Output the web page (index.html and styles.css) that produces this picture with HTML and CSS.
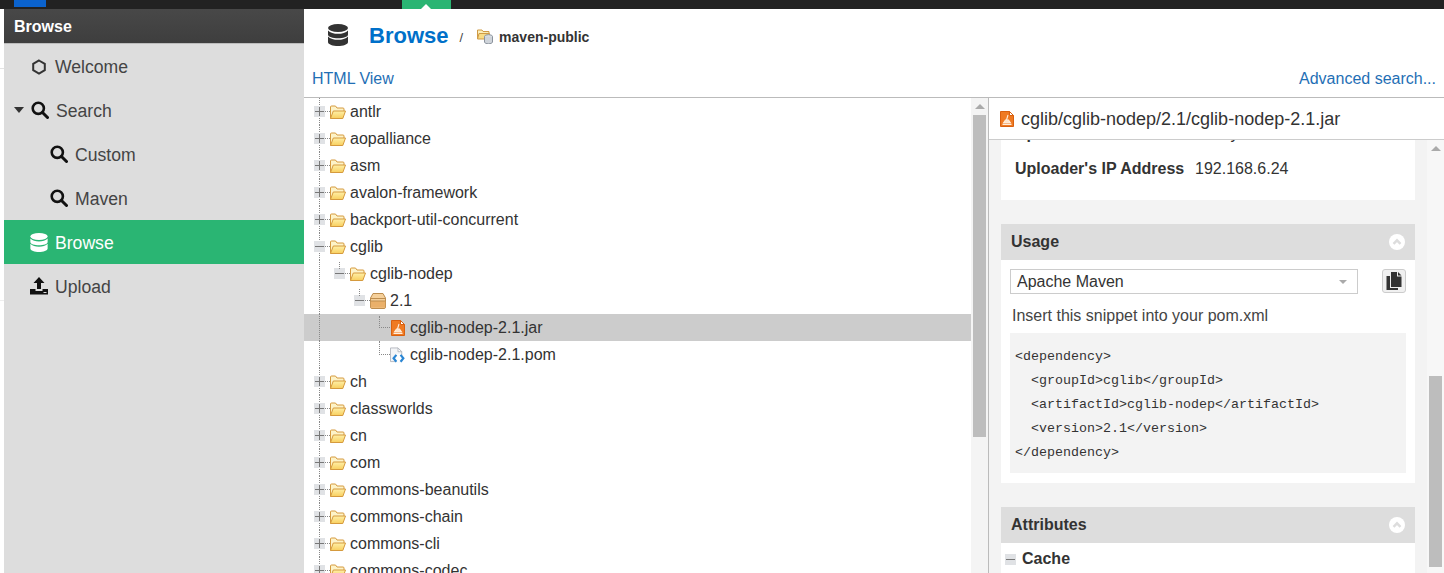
FILE: index.html
```html
<!DOCTYPE html>
<html lang="en">
<head>
<meta charset="utf-8">
<title>Browse</title>
<link rel="stylesheet" href="styles.css">
</head>
<body>
<svg class="defs" aria-hidden="true">
  <defs>
    <linearGradient id="fy" x1="0" y1="0" x2="0" y2="1"><stop offset="0" stop-color="#fff0a8"/><stop offset="1" stop-color="#f8cf5e"/></linearGradient>
    <symbol id="folder" viewBox="0 0 16 16">
      <path d="M.5 14.500V3a1 1 0 0 1 1-1h4l1.500 2h6a1 1 0 0 1 1 1v2.500" fill="#fdf3c8" stroke="#d59a3e"/>
      <path d="M.5 14.500 3.300 7h12.200l-2.700 7.500z" fill="url(#fy)" stroke="#d59a3e" stroke-linejoin="round"/>
    </symbol>
    <symbol id="pkg" viewBox="0 0 16 16">
      <path d="M3 .5h10l2.500 4.500v9a1.500 1.500 0 0 1-1.500 1.500H2A1.500 1.500 0 0 1 .5 14V5z" fill="#f5d09b" stroke="#bd8d4f"/>
      <path d="M.8 8h14.400v6.700H.8z" fill="#eab06a"/>
      <path d="M.5 5.500h15M.5 8h15" stroke="#bd8d4f"/>
    </symbol>
    <symbol id="jar" viewBox="0 0 14 16">
      <path d="M.5.500h9l4 4v11H.5z" fill="#ef7a22" stroke="#d9600f"/>
      <path d="M9.500.500v4h4z" fill="#fff" stroke="#d9600f"/>
      <path d="M8 4 6.500 9M5.500 9h3L10.500 12h-7zM2.500 13.500h9" fill="#ffe3c7" stroke="#ffeedd" stroke-width="1.100"/>
    </symbol>
    <symbol id="pom" viewBox="0 0 17 16">
      <path d="M.5.500h8l4 4v10.500H.5z" fill="#f4f5f7" stroke="#b4b8bf"/>
      <path d="M8.500.500v4h4z" fill="#fff" stroke="#b4b8bf"/>
      <circle cx="9" cy="11.500" r="4.500" fill="#fff"/>
      <path d="M6.800 7.800 3.800 11.500l3 3.700M11.200 7.800l3 3.700-3 3.700" fill="none" stroke="#2a86d4" stroke-width="2.300"/>
    </symbol>
    <symbol id="search" viewBox="0 0 18 18">
      <circle cx="7.300" cy="7.300" r="5.600" fill="none" stroke="currentColor" stroke-width="2.600"/>
      <path d="M11.500 11.500 16.500 16.500" stroke="currentColor" stroke-width="3" stroke-linecap="round"/>
    </symbol>
    <symbol id="db" viewBox="0 0 20 22">
      <ellipse cx="10" cy="4" rx="10" ry="4" fill="currentColor"/>
      <path d="M0 6.500C2 9 6 9.800 10 9.800S18 9 20 6.500V10.500C20 13 15 14.300 10 14.300S0 13 0 10.500zM0 12.500C2 15 6 15.800 10 15.800S18 15 20 12.500V18C20 20.500 15 22 10 22S0 20.500 0 18z" fill="currentColor"/>
    </symbol>
  </defs>
</svg>

<div class="topbar">
  <span class="tab-blue"></span>
  <span class="tab-green"></span>
</div>

<div class="app">
  <div class="gutter"></div>

  <nav class="sidebar">
    <div class="side-head">Browse</div>
    <div class="nav-item">
      <svg class="nav-ico hex" viewBox="0 0 16 16"><path d="M8 1.500 13.800 4.800v6.400L8 14.500 2.200 11.200V4.800z" fill="none" stroke="currentColor" stroke-width="2"/></svg>
      <span class="nav-label">Welcome</span>
    </div>
    <div class="nav-item nav-parent">
      <span class="caret"></span>
      <svg class="nav-ico"><use href="#search"/></svg>
      <span class="nav-label">Search</span>
    </div>
    <div class="nav-item nav-sub">
      <svg class="nav-ico"><use href="#search"/></svg>
      <span class="nav-label">Custom</span>
    </div>
    <div class="nav-item nav-sub">
      <svg class="nav-ico"><use href="#search"/></svg>
      <span class="nav-label">Maven</span>
    </div>
    <div class="nav-item active">
      <svg class="nav-ico nav-db"><use href="#db"/></svg>
      <span class="nav-label">Browse</span>
    </div>
    <div class="nav-item">
      <svg class="nav-ico" viewBox="0 0 18 18"><path d="M9 0 14.500 6H11v6H7V6H3.500z" fill="currentColor"/><path d="M0 12h5.500v2h7v-2H18v5.500H0z" fill="currentColor"/><path d="M13.500 15.500h3" stroke="#ddd"/></svg>
      <span class="nav-label">Upload</span>
    </div>
  </nav>

  <main class="main">
    <header class="title-row">
      <svg class="title-db"><use href="#db"/></svg>
      <h1 class="title">Browse</h1>
      <span class="slash">/</span>
      <svg class="repo-ico" viewBox="0 0 16 16">
        <path d="M.5 11V2h4.500l1 1.500h6V6" fill="#fbeeb9" stroke="#cf9a45"/>
        <path d="M.5 11 2 5.500h10.500L11 11z" fill="#f9dc85" stroke="#cf9a45"/>
        <ellipse cx="11.500" cy="8.500" rx="4" ry="1.800" fill="#dfe3e8" stroke="#8a929c"/>
        <path d="M7.500 8.500V14c0 1 1.800 1.800 4 1.800s4-.8 4-1.800V8.500" fill="#cfd4da" stroke="#8a929c"/>
      </svg>
      <span class="repo-name">maven-public</span>
    </header>
    <div class="link-row">
      <a class="link">HTML View</a>
      <a class="link">Advanced search...</a>
    </div>

    <div class="panes">
      <section class="tree">
        <div class="row"><span class="exp plus"></span><span class="stub"></span><svg class="ico"><use href="#folder"/></svg><span>antlr</span></div>
        <div class="row"><span class="exp plus"></span><span class="stub"></span><svg class="ico"><use href="#folder"/></svg><span>aopalliance</span></div>
        <div class="row"><span class="exp plus"></span><span class="stub"></span><svg class="ico"><use href="#folder"/></svg><span>asm</span></div>
        <div class="row"><span class="exp plus"></span><span class="stub"></span><svg class="ico"><use href="#folder"/></svg><span>avalon-framework</span></div>
        <div class="row"><span class="exp plus"></span><span class="stub"></span><svg class="ico"><use href="#folder"/></svg><span>backport-util-concurrent</span></div>
        <div class="row"><span class="exp minus"></span><span class="stub"></span><svg class="ico"><use href="#folder"/></svg><span>cglib</span></div>
        <div class="row nested l1"><span class="exp minus"></span><span class="stub"></span><svg class="ico"><use href="#folder"/></svg><span>cglib-nodep</span></div>
        <div class="row nested l2"><span class="exp minus"></span><span class="stub"></span><svg class="ico"><use href="#pkg"/></svg><span>2.1</span></div>
        <div class="row leaf selected"><span class="elbow"></span><svg class="ico-file"><use href="#jar"/></svg><span>cglib-nodep-2.1.jar</span></div>
        <div class="row leaf last"><span class="elbow"></span><svg class="ico-file"><use href="#pom"/></svg><span>cglib-nodep-2.1.pom</span></div>
        <div class="row"><span class="exp plus"></span><span class="stub"></span><svg class="ico"><use href="#folder"/></svg><span>ch</span></div>
        <div class="row"><span class="exp plus"></span><span class="stub"></span><svg class="ico"><use href="#folder"/></svg><span>classworlds</span></div>
        <div class="row"><span class="exp plus"></span><span class="stub"></span><svg class="ico"><use href="#folder"/></svg><span>cn</span></div>
        <div class="row"><span class="exp plus"></span><span class="stub"></span><svg class="ico"><use href="#folder"/></svg><span>com</span></div>
        <div class="row"><span class="exp plus"></span><span class="stub"></span><svg class="ico"><use href="#folder"/></svg><span>commons-beanutils</span></div>
        <div class="row"><span class="exp plus"></span><span class="stub"></span><svg class="ico"><use href="#folder"/></svg><span>commons-chain</span></div>
        <div class="row"><span class="exp plus"></span><span class="stub"></span><svg class="ico"><use href="#folder"/></svg><span>commons-cli</span></div>
        <div class="row"><span class="exp plus"></span><span class="stub"></span><svg class="ico"><use href="#folder"/></svg><span>commons-codec</span></div>
      </section>

      <div class="scrollbar tree-sb">
        <span class="sb-arrow"></span>
        <span class="sb-thumb tree-thumb"></span>
      </div>

      <section class="detail">
        <div class="detail-head">
          <svg class="detail-ico"><use href="#jar"/></svg>
          <span class="detail-path">cglib/cglib-nodep/2.1/cglib-nodep-2.1.jar</span>
        </div>
        <div class="detail-body">
          <div class="detail-content">
            <div class="card card-scrolled">
              <div class="kv"><strong class="k">Uploader</strong><span>anonymous</span></div>
              <div class="kv"><strong class="k">Uploader's IP Address</strong><span>192.168.6.24</span></div>
            </div>

            <div class="panel">
              <div class="panel-head"><span>Usage</span><svg class="chev" viewBox="0 0 16 16"><circle cx="8" cy="8" r="8" fill="#fff"/><path d="M4.500 9.800 8 6.300l3.500 3.500" fill="none" stroke="#ddd" stroke-width="2.400"/></svg></div>
              <div class="panel-body">
                <div class="select-row">
                  <div class="select"><span>Apache Maven</span><span class="select-arrow"></span></div>
                  <button class="copy" type="button">
                    <svg viewBox="0 0 16 18" class="copy-ico"><path d="M5 0h6v4.500h4.500V15H5z" fill="#333"/><path d="M12 0l3.500 3.500H12z" fill="#333"/><path d="M.5 4H4v12h8v2H.5z" fill="#333"/></svg>
                  </button>
                </div>
                <p class="hint">Insert this snippet into your pom.xml</p>
                <pre class="code">&lt;dependency&gt;
  &lt;groupId&gt;cglib&lt;/groupId&gt;
  &lt;artifactId&gt;cglib-nodep&lt;/artifactId&gt;
  &lt;version&gt;2.1&lt;/version&gt;
&lt;/dependency&gt;</pre>
              </div>
            </div>

            <div class="panel">
              <div class="panel-head"><span>Attributes</span><svg class="chev" viewBox="0 0 16 16"><circle cx="8" cy="8" r="8" fill="#fff"/><path d="M4.500 9.800 8 6.300l3.500 3.500" fill="none" stroke="#ddd" stroke-width="2.400"/></svg></div>
              <div class="attr-row"><span class="exp minus"></span><strong>Cache</strong></div>
            </div>
          </div>
          <div class="scrollbar detail-sb">
            <span class="sb-arrow"></span>
            <span class="sb-thumb detail-thumb"></span>
          </div>
        </div>
      </section>
    </div>
  </main>
</div>
</body>
</html>
```

FILE: styles.css
```css
* { box-sizing: border-box; }

html, body {
  margin: 0;
  height: 573px;
  overflow: hidden;
  background: #fff;
  font-family: "Liberation Sans", Arial, sans-serif;
  font-size: 16px;
  color: #333;
}

.defs { width: 0; height: 0; display: block; }

/* top bar */
.topbar {
  height: 9px;
  background: #222;
  display: flex;
  padding-left: 14px;
}
.tab-blue { width: 32px; height: 7px; background: #0b63ce; }
.tab-green {
  width: 49px;
  height: 9px;
  margin-left: 356px;
  background: #2ab573;
  position: relative;
}
.tab-green::after {
  content: "";
  position: absolute;
  left: 19px;
  bottom: 0;
  border: 5px solid transparent;
  border-top: 0;
  border-bottom-color: #fff;
}

.app { display: flex; height: 564px; }

.gutter {
  width: 4px;
  background:
    linear-gradient(#e3e3e3, #e3e3e3) 0 59px / 4px 1px no-repeat,
    linear-gradient(#eee, #eee) 0 291px / 4px 1px no-repeat;
}

/* sidebar */
.sidebar { width: 300px; background: #ddd; flex: none; }
.side-head {
  height: 35px;
  padding: 2px 0 0 10px;
  display: flex;
  align-items: center;
  font-weight: bold;
  color: #fff;
  background: linear-gradient(#484848, #3e3e3e);
  border-bottom: 1px solid #bbb;
}
.nav-item {
  height: 44px;
  display: flex;
  align-items: center;
  padding-left: 26px;
  font-size: 17.6px;
  color: #444;
}
.nav-label { padding-top: 2px; }
.nav-ico {
  width: 18px;
  height: 18px;
  margin-right: 7px;
  color: #111;
  flex: none;
}
.nav-db { height: 19px; }
.hex { color: #333; width: 16px; height: 16px; margin: 2px 8px 0 1px; }
.nav-parent { padding-left: 10px; }
.caret {
  width: 0;
  height: 0;
  margin-right: 7px;
  border: 5px solid transparent;
  border-bottom: 0;
  border-top: 6px solid #333;
}
.nav-sub { padding-left: 46px; }
.active { background: #2ab573; color: #fff; }
.active .nav-ico { color: #fff; }

/* main */
.main { flex: 1; min-width: 0; display: flex; flex-direction: column; }
.title-row {
  height: 52px;
  flex: none;
  display: flex;
  align-items: center;
  padding: 2px 0 0 24px;
}
.title-db { width: 20px; height: 22px; margin: -2px 21px 0 0; color: #333; }
.title { margin: 0; font-size: 22px; font-weight: bold; color: #0070c9; }
.slash { margin: 2px 14px 0 11px; font-size: 13px; color: #444; }
.repo-ico { width: 16px; height: 16px; margin-right: 6px; }
.repo-name { font-size: 14px; font-weight: bold; color: #333; margin-top: 2px; }

.link-row {
  height: 37px;
  flex: none;
  display: flex;
  justify-content: space-between;
  align-items: center;
  padding: 0 8px;
  border-bottom: 1px solid #bbb;
}
.link { color: #1f6fb5; }

.panes { flex: 1; min-height: 0; display: flex; }

/* tree */
.tree { width: 667px; flex: none; overflow: hidden; }
.row {
  height: 27px;
  display: flex;
  align-items: center;
  padding-left: 10px;
  position: relative;
  background-image: repeating-linear-gradient(#888 0 1px, transparent 1px 2px);
  background-size: 1px 100%;
  background-position: 15px 0;
  background-repeat: no-repeat;
}
.exp {
  width: 11px;
  height: 11px;
  flex: none;
  background-color: #e0e2e5;
}
.plus {
  background-image: linear-gradient(#777, #777), linear-gradient(#777, #777);
  background-size: 9px 1px, 1px 9px;
  background-position: center, center;
  background-repeat: no-repeat;
}
.minus {
  background-image: linear-gradient(#777, #777);
  background-size: 9px 1px;
  background-position: center;
  background-repeat: no-repeat;
}
.stub { width: 5px; border-top: 1px dotted #888; flex: none; }
.ico { width: 16px; height: 16px; margin-right: 4px; flex: none; }
.ico-file { width: 16px; height: 16px; margin-right: 4px; flex: none; }

.l1 { padding-left: 30px; }
.l2 { padding-left: 50px; }
.nested::before {
  content: "";
  position: absolute;
  top: 2px;
  height: 7px;
  border-left: 1px dotted #888;
}
.l1::before { left: 35px; }
.l2::before { left: 55px; }

.leaf { padding-left: 75px; }
.elbow { width: 11px; border-top: 1px dotted #888; flex: none; }
.leaf::before {
  content: "";
  position: absolute;
  left: 75px;
  top: 2px;
  height: 12px;
  border-left: 1px dotted #888;
}
.leaf.last::before { top: 0; height: 14px; }
.selected { background-color: #ccc; }

/* scrollbars */
.scrollbar {
  width: 17px;
  flex: none;
  display: flex;
  flex-direction: column;
  align-items: center;
}
.sb-arrow {
  width: 0;
  height: 0;
  flex: none;
  box-sizing: content-box;
  border-left: 5px solid transparent;
  border-right: 5px solid transparent;
  border-bottom: 5px solid #aaa;
  margin-top: 6px;
}
.sb-thumb { width: 13px; background: #bdbdbd; flex: none; }
.tree-sb { background: #f4f4f4; }
.tree-thumb { height: 322px; margin-top: 6px; }
.detail-sb { background: #f7f7f7; height: 433px; }
.detail-thumb { height: 191px; margin-top: 225px; }

/* detail */
.detail {
  flex: 1;
  min-width: 0;
  border-left: 1px solid #bbb;
  display: flex;
  flex-direction: column;
}
.detail-head {
  height: 42px;
  flex: none;
  display: flex;
  align-items: center;
  padding-left: 11px;
  font-size: 18px;
  background: #fff;
  border-bottom: 1px solid #ccc;
}
.detail-ico { width: 14px; height: 16px; margin-right: 7px; }
.detail-path { padding-top: 2px; }
.detail-body { flex: 1; min-height: 0; display: flex; background: #f3f3f3; overflow: hidden; }
.detail-content { flex: 1; min-width: 0; padding: 0 12px; overflow: hidden; }

.card { background: #fff; overflow: hidden; }
.card-scrolled { height: 60px; margin-bottom: 24px; }
.kv { height: 32px; display: flex; align-items: center; padding-left: 14px; }
.kv:first-child { margin: -22px 0 3px; }
.k { width: 180px; color: #333; }

.panel { background: #fff; margin-bottom: 24px; }
.panel-head {
  height: 36px;
  background: #ddd;
  display: flex;
  align-items: center;
  justify-content: space-between;
  padding: 0 10px;
  font-weight: bold;
}
.chev { width: 16px; height: 16px; }
.panel-body { padding: 9px 9px 10px; }
.select-row { display: flex; justify-content: space-between; height: 25px; }
.select {
  width: 348px;
  height: 25px;
  border: 1px solid #ccc;
  display: flex;
  align-items: center;
  justify-content: space-between;
  padding: 0 10px 0 6px;
}
.select-arrow {
  border: 4px solid transparent;
  border-bottom: 0;
  border-top: 4px solid #aaa;
}
.copy {
  width: 24px;
  height: 24px;
  padding: 0;
  display: flex;
  align-items: center;
  justify-content: center;
  border: 1px solid #ccc;
  border-radius: 3px;
  background: #f0f0f0;
}
.copy-ico { width: 16px; height: 18px; }
.hint { margin: 0; height: 39px; display: flex; align-items: center; padding: 5px 0 0 2px; color: #444; }
.code {
  margin: 0;
  height: 140px;
  padding: 12px 5px 8px;
  background: #f3f3f3;
  font-family: "Liberation Mono", "Courier New", monospace;
  font-size: 13.33px;
  line-height: 24px;
  color: #333;
}
.attr-row { display: flex; align-items: center; height: 32px; padding-left: 4px; }
.attr-row strong { margin-left: 6px; }
```
